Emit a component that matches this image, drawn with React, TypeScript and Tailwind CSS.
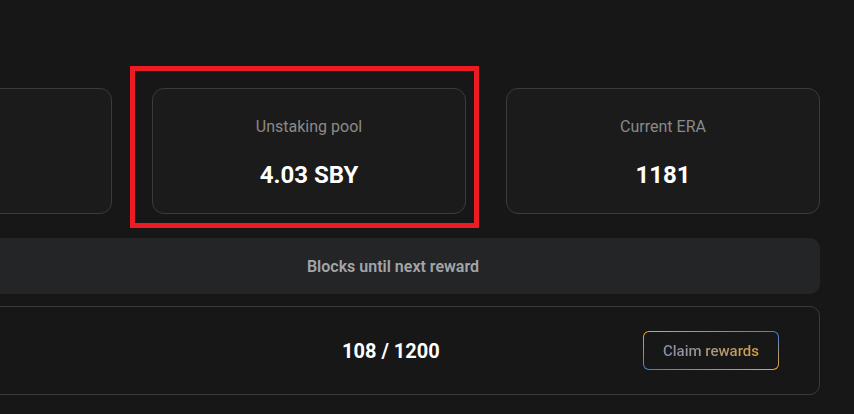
import React from "react";

type Stat = {
  label?: string;
  value?: string;
  highlight?: boolean;
};

const stats: Stat[] = [
  {},
  { label: "Unstaking pool", value: "4.03 SBY", highlight: true },
  { label: "Current ERA", value: "1181" },
];

function StatCard({ label, value, highlight }: Stat) {
  return (
    <div className="relative">
      <div className="h-[126px] pt-[3px] flex flex-col items-center justify-center gap-5 rounded-xl border border-[#3b3b3b] bg-[#1b1b1b]">
        {label && <p className="text-base leading-6 text-[#8a8a8a]">{label}</p>}
        {value && <p className="text-2xl leading-8 font-bold text-white">{value}</p>}
      </div>
      {highlight && (
        <div className="absolute left-[-22px] top-[-22px] w-[349px] h-[162px] border-[5px] border-[#ed1c24] pointer-events-none" />
      )}
    </div>
  );
}

export default function App() {
  return (
    <div
      className="w-full h-[414px] overflow-hidden bg-[#171717]"
      style={{ fontFamily: "Roboto, 'Liberation Sans', sans-serif" }}
    >
      <div className="ml-[-202px] w-[1022px] pt-[88px]">
        <div className="grid grid-cols-3 gap-10">
          {stats.map((s, i) => (
            <StatCard key={i} {...s} />
          ))}
        </div>

        <div className="mt-6 h-14 flex items-center justify-center pl-[168px] pt-px rounded-[10px] bg-[#242527]">
          <span className="text-base font-semibold text-[#a2a5a9]">Blocks until next reward</span>
        </div>

        <div className="mt-3 h-[89px] flex items-center pr-10 rounded-[10px] border border-[#3b3b3b]">
          <span className="ml-[543px] text-xl font-bold text-white">108 / 1200</span>
          <div className="flex-1" />
          <button className="p-px rounded-md bg-[linear-gradient(to_top_right,#3b7bf0,#f0a52a_50%,#3b7bf0)]">
            <span className="flex items-center justify-center w-[134px] h-[37px] pt-px rounded-[5px] bg-[#171717]">
              <span className="text-[15px] font-medium bg-[linear-gradient(to_right,#7e8fb6,#d8a042)] bg-clip-text text-transparent">
                Claim rewards
              </span>
            </span>
          </button>
        </div>
      </div>
    </div>
  );
}
